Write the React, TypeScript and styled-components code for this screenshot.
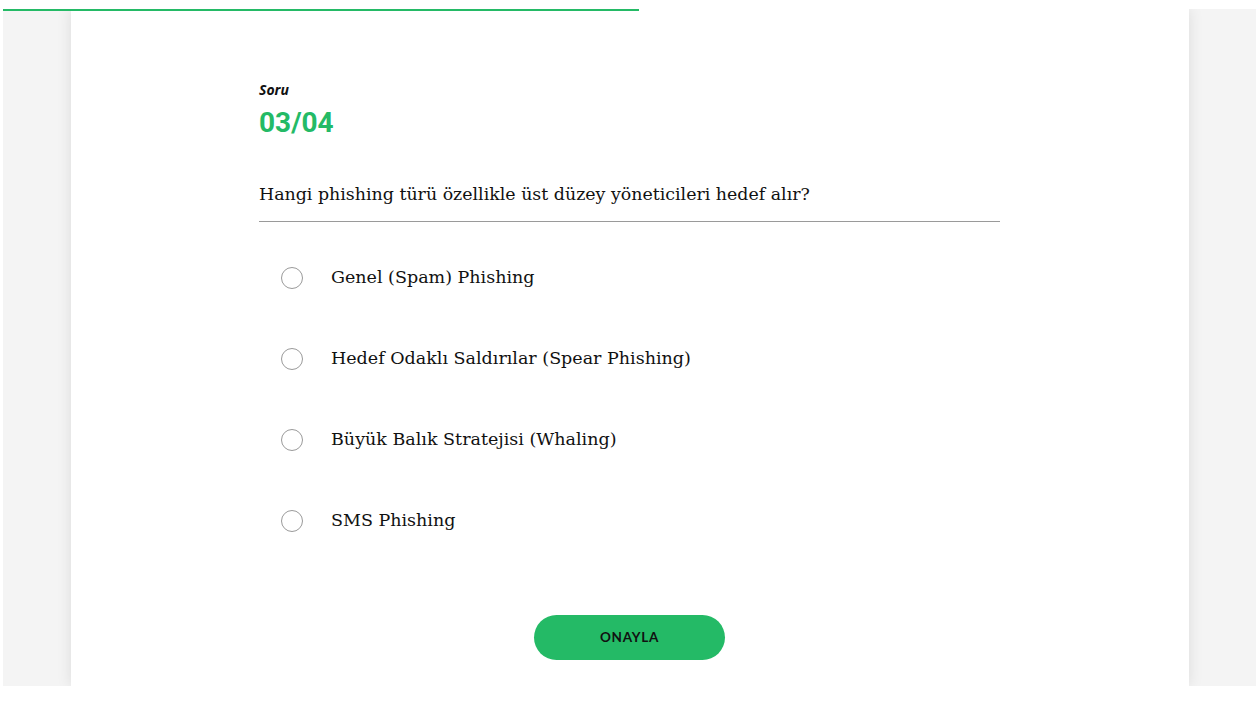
import React, { useState } from 'react';
import styled, { createGlobalStyle } from 'styled-components';

const GlobalStyle = createGlobalStyle`
  html, body {
    margin: 0;
    padding: 0;
    background: #ffffff;
  }
`;

const GREEN = '#24ba66';

const Page = styled('div')`
  padding: 9px 2px 34px 3px;
`;

const Panel = styled('div')`
  position: relative;
  height: 677px;
  overflow: hidden;
  background: #f4f4f4;
  display: flex;
  justify-content: center;
`;

const Progress = styled('div')`
  position: absolute;
  top: 0;
  left: 0;
  height: 2px;
  background: ${GREEN};
  z-index: 2;
`;

const Card = styled('div')`
  width: 1118px;
  height: 100%;
  background: #ffffff;
  box-shadow: 0 0 14px rgba(0, 0, 0, 0.1);
  padding-top: 71px;
  box-sizing: border-box;
`;

const Content = styled('div')`
  width: 741px;
  margin: 0 auto;
  display: flex;
  flex-direction: column;
`;

const Label = styled('div')`
  font-family: 'Noto Sans', sans-serif;
  font-style: italic;
  font-weight: 700;
  font-size: 14px;
  line-height: 20px;
  color: #111;
`;

const Counter = styled('div')`
  margin-top: 6px;
  font-family: Roboto, sans-serif;
  font-weight: 700;
  font-size: 28px;
  line-height: 34px;
  color: ${GREEN};
`;

const Question = styled('div')`
  margin-top: 39px;
  padding-bottom: 12px;
  border-bottom: 1px solid #9a9a9a;
  font-family: 'DejaVu Serif', serif;
  font-size: 17.4px;
  line-height: 30px;
  color: #111;
`;

const Options = styled('div')`
  margin-top: 15px;
  display: flex;
  flex-direction: column;
`;

const Option = styled('label')`
  height: 81px;
  display: flex;
  align-items: center;
  padding-left: 22px;
  cursor: pointer;
  font-family: 'DejaVu Serif', serif;
  font-size: 17.5px;
  line-height: 22px;
  color: #111;
`;

const Radio = styled('span')<{ checked: boolean }>`
  width: 22px;
  height: 22px;
  box-sizing: border-box;
  border-radius: 50%;
  border: 1px solid #9a9a9a;
  margin-right: 28px;
  flex-shrink: 0;
  background: ${({ checked }) => (checked ? GREEN : '#fff')};
`;

const OptionText = styled('span')`
  position: relative;
  top: -1px;
`;

const Button = styled('button')`
  margin: 54px auto 0;
  width: 191px;
  height: 45px;
  padding: 0;
  border: none;
  border-radius: 23px;
  background: ${GREEN};
  color: #111;
  font-family: Lato, sans-serif;
  font-weight: 700;
  font-size: 13.5px;
  line-height: 43px;
  letter-spacing: 0.7px;
  cursor: pointer;
`;

const OPTIONS = [
  'Genel (Spam) Phishing',
  'Hedef Odaklı Saldırılar (Spear Phishing)',
  'Büyük Balık Stratejisi (Whaling)',
  'SMS Phishing',
];

export default function App() {
  const [selected, setSelected] = useState<number | null>(null);

  return (
    <>
      <GlobalStyle />
      <Page>
        <Panel>
          <Progress style={{ width: '636px' }} />
          <Card>
            <Content>
              <Label>Soru</Label>
              <Counter>03/04</Counter>
              <Question>Hangi phishing türü özellikle üst düzey yöneticileri hedef alır?</Question>
              <Options>
                {OPTIONS.map((text, i) => (
                  <Option key={text} onClick={() => setSelected(i)}>
                    <Radio checked={selected === i} />
                    <OptionText>{text}</OptionText>
                  </Option>
                ))}
              </Options>
              <Button>ONAYLA</Button>
            </Content>
          </Card>
        </Panel>
      </Page>
    </>
  );
}
